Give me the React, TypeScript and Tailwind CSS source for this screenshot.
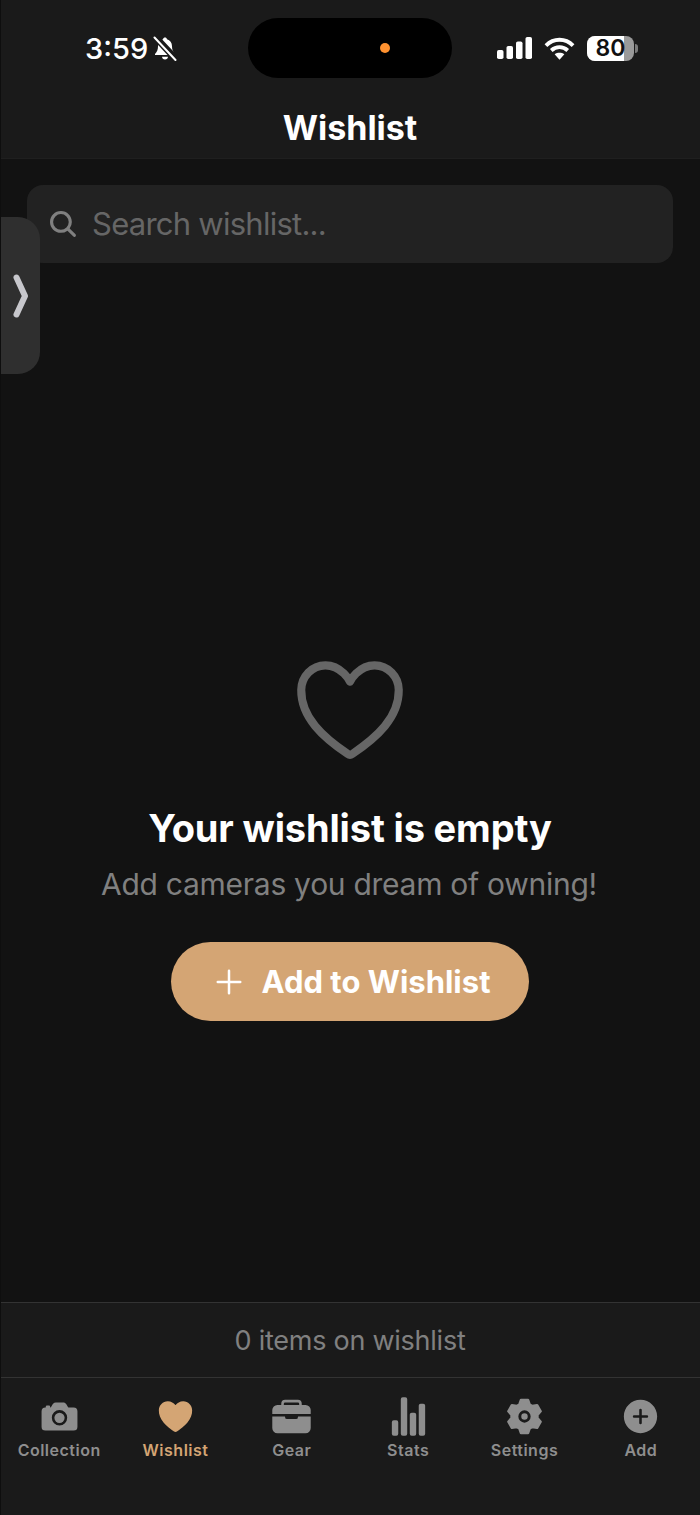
import React from "react";
import { IoCamera, IoHeart, IoHeartOutline, IoBriefcase, IoStatsChart, IoAddCircle, IoSearch, IoAdd } from "react-icons/io5";

function gearPath() {
  const pts: string[] = [];
  const pt = (r: number, deg: number) => {
    const a = (deg * Math.PI) / 180;
    return `${(21 + r * Math.cos(a)).toFixed(2)} ${(21 + r * Math.sin(a)).toFixed(2)}`;
  };
  for (let k = 0; k < 6; k++) {
    const a = k * 60 - 90;
    pts.push(pt(13.4, a - 23), pt(17.4, a - 12), pt(17.4, a + 12), pt(13.4, a + 23));
  }
  return "M" + pts.join("L") + "Z";
}

function GearIcon({ className }: { className: string }) {
  return (
    <svg viewBox="0 0 42 42" className={className} fill="currentColor" stroke="currentColor" strokeWidth="2.500" strokeLinejoin="round">
      <path d={gearPath()} />
      <circle cx="21" cy="21" r="4.800" fill="none" stroke="#1a1a1a" strokeWidth="3" />
    </svg>
  );
}

const tabs = [
  { label: "Collection", Icon: IoCamera, active: false },
  { label: "Wishlist", Icon: IoHeart, active: true },
  { label: "Gear", Icon: IoBriefcase, active: false },
  { label: "Stats", Icon: IoStatsChart, active: false },
  { label: "Settings", Icon: GearIcon, active: false },
  { label: "Add", Icon: IoAddCircle, active: false },
];

export default function App() {
  return (
    <div className="relative w-[700px] h-[1515px] flex flex-col overflow-hidden bg-[#121212] border-l border-l-[#0e0e0e] font-['Inter',sans-serif] text-white">
      <header className="h-[159px] shrink-0 bg-[#1a1a1a] border-b border-[#1f1f1f] flex flex-col pr-[1px]">
        <div className="mt-[18px] h-[60px] flex items-center">
          <div className="w-[247px] pl-[84px] flex items-center gap-[5px]">
            <span className="text-[29px] font-medium leading-none">3:59</span>
            <svg width="24" height="25" viewBox="0 0 24 25" fill="none">
              <path d="M12 1.500c1 0 1.800.7 2 1.700 3 .9 5 3.500 5 7 0 3.500.8 5.500 3 7.800v1H2v-1c2.200-2.300 3-4.300 3-7.800 0-3.500 2-6.100 5-7C10.200 2.200 11 1.500 12 1.500z" fill="#fff" />
              <path d="M9 20.800h6c0 1.500-1.300 2.700-3 2.700s-3-1.200-3-2.700z" fill="#fff" />
              <path d="M3 0.500l21 22.500" stroke="#1a1a1a" strokeWidth="5" />
              <path d="M1.500 1.500l21 22.500" stroke="#1a1a1a" strokeWidth="5" />
              <path d="M1.500 1.500l21 22.500" stroke="#fff" strokeWidth="2" strokeLinecap="round" />
            </svg>
          </div>
          <div className="w-[204px] h-[60px] rounded-full bg-black flex items-center pl-[132px]">
            <div className="w-[10px] h-[10px] rounded-full bg-[#ff9230]" />
          </div>
          <div className="pl-[45px] flex items-center gap-[12px]">
            <svg width="35" height="22" viewBox="0 0 35 22" fill="#fff">
              <rect x="0" y="13" width="6.500" height="9" rx="1.800" />
              <rect x="9.500" y="9" width="6.500" height="13" rx="1.800" />
              <rect x="19" y="4.500" width="6.500" height="17.500" rx="1.800" />
              <rect x="28.500" y="0" width="6.500" height="22" rx="1.800" />
            </svg>
            <svg width="31" height="23" viewBox="0 0 32 23" fill="none" stroke="#fff" strokeWidth="4">
              <path d="M2 8.500C10 .5 22 .5 30 8.500" />
              <path d="M7.500 13.500C12.500 9 19.500 9 24.500 13.500" />
              <path d="M16 23l-5-5.500c3-2 7-2 10 0L16 23z" fill="#fff" stroke="none" />
            </svg>
            <div className="flex items-center gap-[1px]">
              <div className="relative w-[47px] h-[25px] rounded-[8px] bg-[#9a9a9a] flex items-center justify-center">
                <div className="absolute left-0 top-0 bottom-0 w-[37px] rounded-l-[8px] bg-white" />
                <span className="relative text-[#111] text-[23px] font-semibold leading-[25px]">80</span>
              </div>
              <div className="w-[3px] h-[9px] rounded-r-full bg-[#7a7a7a]" />
            </div>
          </div>
        </div>
        <div className="mt-[29px] text-center text-[34px] leading-[42px] font-bold">Wishlist</div>
      </header>

      <main className="relative flex-1 flex flex-col items-center pr-[1px]">
        <div className="mt-[26px] w-[646px] h-[78px] shrink-0 rounded-[16px] bg-[#222222] flex items-center pl-[20px] gap-[13px]">
          <IoSearch className="w-[32px] h-[32px] text-[#808080]" />
          <span className="text-[31px] leading-none text-[#666666] tracking-[-0.75px] -mt-[2px]">Search wishlist...</span>
        </div>
        <div className="absolute left-0 top-[58px] w-[39px] h-[157px] rounded-r-[22px] bg-[#2f2f2f] flex items-center">
          <svg width="16" height="44" viewBox="0 0 16 44" fill="none" className="ml-[12px]">
            <path d="M3.500 3.500L12 22L3.500 40.500" stroke="#c7c7cc" strokeWidth="6" strokeLinecap="round" strokeLinejoin="round" />
          </svg>
        </div>
        <IoHeartOutline className="mt-[382px] w-[130px] h-[130px] text-[#666666]" />
        <h2 className="mt-[30px] text-[38px] leading-[46px] font-bold tracking-[-0.15px]">Your wishlist is empty</h2>
        <p className="mt-[15px] text-[30px] leading-[38px] text-[#808080] tracking-[-0.27px] -translate-x-[1px] -translate-y-[1px]">Add cameras you dream of owning!</p>
        <button className="mt-[38px] w-[358px] h-[79px] rounded-full bg-[#d4a574] flex items-center justify-center gap-[12px]">
          <IoAdd className="w-[40px] h-[40px] text-white" />
          <span className="text-[31px] font-bold leading-none">Add to Wishlist</span>
        </button>
      </main>

      <div className="h-[75px] shrink-0 bg-[#1a1a1a] border-t border-t-[#333333] flex items-center justify-center pt-[3px] pr-[1px] text-[27px] text-[#808080] tracking-[-0.25px]">
        0 items on wishlist
      </div>
      <nav className="h-[138px] shrink-0 bg-[#1a1a1a] border-t border-t-[#333333] grid grid-cols-6 pr-[1px]">
        {tabs.map(({ label, Icon, active }) => (
          <div key={label} className="flex flex-col items-center pt-[18px]">
            <Icon className={`w-[41px] h-[41px] ${active ? "text-[#d4a574]" : "text-[#8e8e8e]"}`} />
            <span className={`mt-[3px] text-[16px] leading-[20px] font-semibold tracking-[0.5px] ${active ? "text-[#d4a574]" : "text-[#8e8e8e]"}`}>{label}</span>
          </div>
        ))}
      </nav>
    </div>
  );
}
